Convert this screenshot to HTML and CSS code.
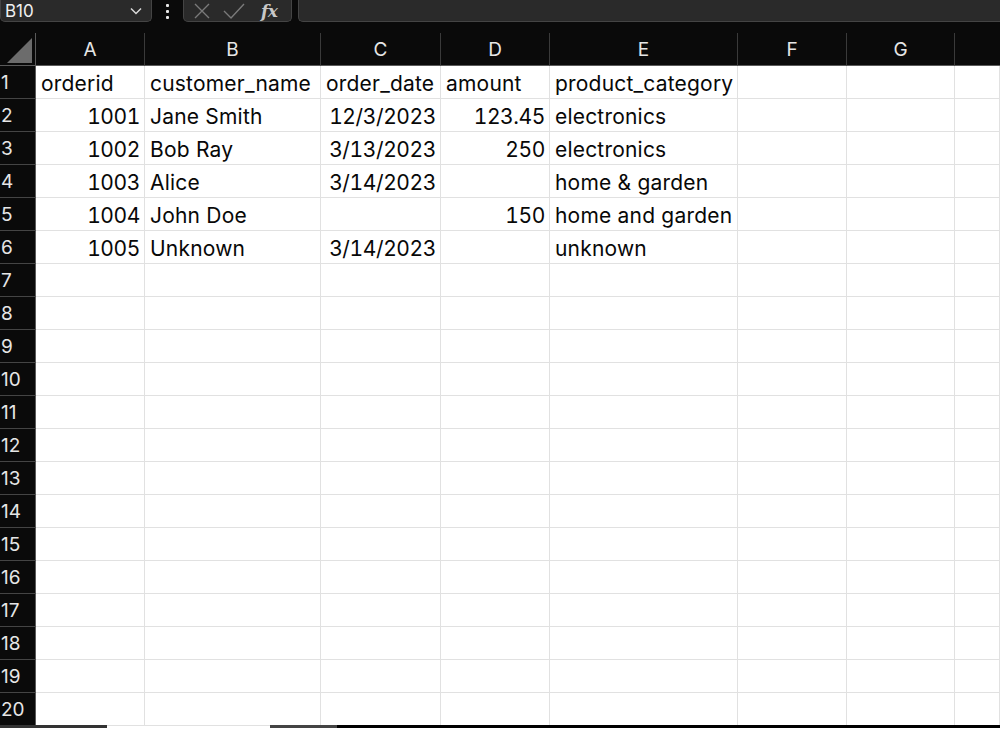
FILE: index.html
```html
<!DOCTYPE html>
<html>
<head>
<meta charset="utf-8">
<link rel="stylesheet" href="styles.css">
</head>
<body>
<div class="app">
  <div class="topbar">
    <div class="namebox">
      <span class="ref">B10</span>
      <svg class="chev" width="14" height="10" viewBox="0 0 14 10"><path d="M2 2.5 L7 7.5 L12 2.5" fill="none" stroke="#d8d8d8" stroke-width="1.5"/></svg>
    </div>
    <div class="dots"><i></i><i></i><i></i></div>
    <div class="fxbox">
      <svg width="18" height="18" viewBox="0 0 18 18"><path d="M2 2 L16 16 M16 2 L2 16" stroke="#7a7a7a" stroke-width="1.4" fill="none"/></svg>
      <svg width="22" height="18" viewBox="0 0 22 18"><path d="M1 9 L8 16 L21 2" stroke="#7a7a7a" stroke-width="1.4" fill="none"/></svg>
      <span class="fx">fx</span>
    </div>
    <div class="formula"></div>
  </div>
  <div class="sheet">
    <div class="hdr corner"><span class="tri"></span></div>
    <div class="hdr col">A</div><div class="hdr col">B</div><div class="hdr col">C</div><div class="hdr col">D</div><div class="hdr col">E</div><div class="hdr col">F</div><div class="hdr col">G</div><div class="hdr col last"></div>

    <div class="hdr row">1</div><div class="c">orderid</div><div class="c">customer_name</div><div class="c">order_date</div><div class="c">amount</div><div class="c">product_category</div><div class="c"></div><div class="c"></div><div class="c"></div>
    <div class="hdr row">2</div><div class="c r">1001</div><div class="c">Jane Smith</div><div class="c r">12/3/2023</div><div class="c r">123.45</div><div class="c">electronics</div><div class="c"></div><div class="c"></div><div class="c"></div>
    <div class="hdr row">3</div><div class="c r">1002</div><div class="c">Bob Ray</div><div class="c r">3/13/2023</div><div class="c r">250</div><div class="c">electronics</div><div class="c"></div><div class="c"></div><div class="c"></div>
    <div class="hdr row">4</div><div class="c r">1003</div><div class="c">Alice</div><div class="c r">3/14/2023</div><div class="c r"></div><div class="c">home &amp; garden</div><div class="c"></div><div class="c"></div><div class="c"></div>
    <div class="hdr row">5</div><div class="c r">1004</div><div class="c">John Doe</div><div class="c r"></div><div class="c r">150</div><div class="c">home and garden</div><div class="c"></div><div class="c"></div><div class="c"></div>
    <div class="hdr row">6</div><div class="c r">1005</div><div class="c">Unknown</div><div class="c r">3/14/2023</div><div class="c r"></div><div class="c">unknown</div><div class="c"></div><div class="c"></div><div class="c"></div>
    <div class="hdr row">7</div><div class="c"></div><div class="c"></div><div class="c"></div><div class="c"></div><div class="c"></div><div class="c"></div><div class="c"></div><div class="c"></div>
    <div class="hdr row">8</div><div class="c"></div><div class="c"></div><div class="c"></div><div class="c"></div><div class="c"></div><div class="c"></div><div class="c"></div><div class="c"></div>
    <div class="hdr row">9</div><div class="c"></div><div class="c"></div><div class="c"></div><div class="c"></div><div class="c"></div><div class="c"></div><div class="c"></div><div class="c"></div>
    <div class="hdr row">10</div><div class="c"></div><div class="c"></div><div class="c"></div><div class="c"></div><div class="c"></div><div class="c"></div><div class="c"></div><div class="c"></div>
    <div class="hdr row">11</div><div class="c"></div><div class="c"></div><div class="c"></div><div class="c"></div><div class="c"></div><div class="c"></div><div class="c"></div><div class="c"></div>
    <div class="hdr row">12</div><div class="c"></div><div class="c"></div><div class="c"></div><div class="c"></div><div class="c"></div><div class="c"></div><div class="c"></div><div class="c"></div>
    <div class="hdr row">13</div><div class="c"></div><div class="c"></div><div class="c"></div><div class="c"></div><div class="c"></div><div class="c"></div><div class="c"></div><div class="c"></div>
    <div class="hdr row">14</div><div class="c"></div><div class="c"></div><div class="c"></div><div class="c"></div><div class="c"></div><div class="c"></div><div class="c"></div><div class="c"></div>
    <div class="hdr row">15</div><div class="c"></div><div class="c"></div><div class="c"></div><div class="c"></div><div class="c"></div><div class="c"></div><div class="c"></div><div class="c"></div>
    <div class="hdr row">16</div><div class="c"></div><div class="c"></div><div class="c"></div><div class="c"></div><div class="c"></div><div class="c"></div><div class="c"></div><div class="c"></div>
    <div class="hdr row">17</div><div class="c"></div><div class="c"></div><div class="c"></div><div class="c"></div><div class="c"></div><div class="c"></div><div class="c"></div><div class="c"></div>
    <div class="hdr row">18</div><div class="c"></div><div class="c"></div><div class="c"></div><div class="c"></div><div class="c"></div><div class="c"></div><div class="c"></div><div class="c"></div>
    <div class="hdr row">19</div><div class="c"></div><div class="c"></div><div class="c"></div><div class="c"></div><div class="c"></div><div class="c"></div><div class="c"></div><div class="c"></div>
    <div class="hdr row">20</div><div class="c"></div><div class="c"></div><div class="c"></div><div class="c"></div><div class="c"></div><div class="c"></div><div class="c"></div><div class="c"></div>
  </div>
  <div class="tabline">
    <span class="seg s1"></span><span class="seg gap"></span><span class="seg s2"></span><span class="seg s3"></span>
  </div>
</div>
</body>
</html>
```

FILE: styles.css
```css
* { box-sizing: border-box; }
html, body { margin: 0; padding: 0; background: #ffffff; }
body { font-family: Inter, "Open Sans", "Liberation Sans", sans-serif; overflow: hidden; }
.app { width: 1000px; }

.topbar {
  display: flex;
  height: 33px;
  background: #0a0a0a;
  align-items: flex-start;
}
.namebox {
  width: 152px;
  height: 22px;
  background: #2a2a2a;
  border: 1px solid #444;
  border-top: none;
  border-radius: 0 0 5px 5px;
  display: flex;
  align-items: center;
  justify-content: space-between;
  padding: 0 8px 0 4px;
}
.ref { color: #f0f0f0; font-size: 17px; line-height: 20px; }
.dots {
  width: 31px;
  height: 22px;
  display: flex;
  flex-direction: column;
  align-items: center;
  justify-content: center;
  gap: 3px;
}
.dots i { display: block; width: 3px; height: 3px; background: #e8e8e8; border-radius: 1px; }
.fxbox {
  width: 109px;
  height: 22px;
  background: #2a2a2a;
  border: 1px solid #444;
  border-top: none;
  border-radius: 0 0 5px 5px;
  display: flex;
  align-items: center;
  padding: 0 6px 0 9px;
  gap: 12px;
}
.fx {
  font-family: "DejaVu Serif", "Liberation Serif", serif;
  font-style: italic;
  font-weight: bold;
  color: #c8c8c8;
  font-size: 17px;
  margin-left: 4px;
  letter-spacing: -0.5px;
}
.formula {
  flex: 1;
  margin-left: 6px;
  height: 22px;
  background: #2a2a2a;
  border: 1px solid #444;
  border-top: none;
  border-right: none;
  border-radius: 0 0 0 5px;
}

.sheet {
  display: grid;
  grid-template-columns: 36px 109px 176px 120px 109px 188px 109px 108px 45px;
  grid-template-rows: 33px repeat(20, 33px);
  font-size: 21px;
}
.hdr {
  background: #0a0a0a;
  color: #e6e6e6;
  display: flex;
  align-items: center;
}
.corner {
  border-right: 1px solid #5a5a5a;
  border-bottom: 1px solid #5a5a5a;
  position: relative;
}
.tri {
  position: absolute;
  left: 7px;
  top: 5px;
  width: 0;
  height: 0;
  border-left: 25px solid transparent;
  border-bottom: 25px solid #6c6c6c;
}
.col {
  justify-content: center;
  border-right: 1px solid #3a3a3a;
  border-bottom: 1px solid #5a5a5a;
  padding-top: 1px;
  font-size: 19px;
}
.col.last { border-right: none; }
.row {
  padding-left: 1px;
  border-right: 1px solid #5a5a5a;
  border-bottom: 1px solid #444;
  font-size: 19px;
}
.c {
  border-right: 1px solid #e1e1e1;
  border-bottom: 1px solid #e1e1e1;
  color: #080808;
  display: flex;
  align-items: center;
  padding: 3px 4px 0 5px;
  white-space: nowrap;
  overflow: hidden;
  letter-spacing: 0.2px;
}
.c.r { justify-content: flex-end; font-variant-numeric: tabular-nums; letter-spacing: -0.4px; }

.tabline {
  display: flex;
  height: 3px;
  margin-top: -1px;
}
.seg { display: block; height: 3px; }
.s1 { width: 107px; background: #333; }
.gap { width: 163px; background: transparent; }
.s2 { width: 67px; background: #444; }
.s3 { flex: 1; background: #000; }
```
